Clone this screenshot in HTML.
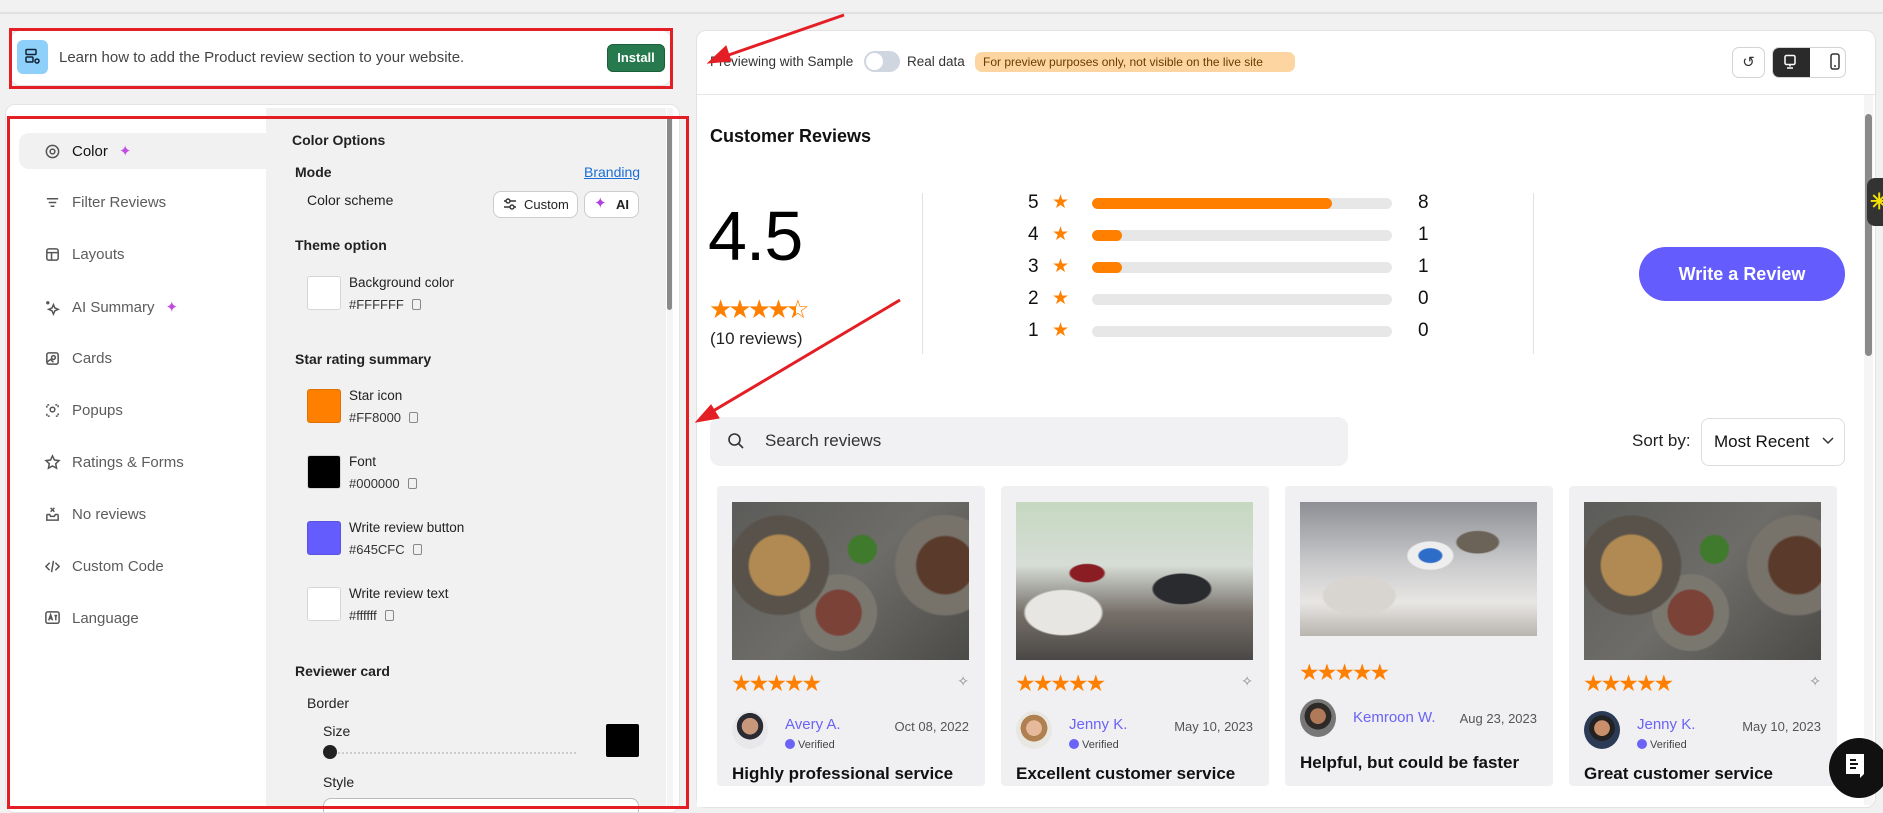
<!DOCTYPE html>
<html><head><meta charset="utf-8">
<style>
*{box-sizing:border-box;margin:0;padding:0}
body{width:1883px;height:813px;overflow:hidden;background:#f1f1f2;font-family:"Liberation Sans",Arial,sans-serif;position:relative;color:#222}
.a{position:absolute}
.nav{position:absolute;left:44px;font-size:15px;color:#5c5c5c;display:flex;align-items:center;gap:11px}
.nav svg{width:17px;height:17px;stroke:#555;fill:none;stroke-width:1.6}
.lbl{position:absolute;font-size:14px;color:#222}
.hex{position:absolute;font-size:13px;color:#333}
.sw{position:absolute;width:34px;height:34px;border:1px solid #d6d6d6;border-radius:3px}
.cp{display:inline-block;width:9px;height:11px;border:1.5px solid #888;border-radius:2px;margin-left:8px;vertical-align:-1px}
.h{position:absolute;font-size:14px;font-weight:bold;color:#222}
.card{position:absolute;top:486px;width:268px;height:300px;background:#f0f0f3;border-radius:4px;overflow:hidden}
.img{position:absolute;left:15px;top:16px;width:237px;height:158px}
.food{background:radial-gradient(circle at 20% 40%,#b08a52 0 14%,#58524a 15% 23%,transparent 24%),radial-gradient(circle at 45% 70%,#7b4238 0 13%,#7a776f 14% 22%,transparent 23%),radial-gradient(circle at 90% 40%,#5a3a2a 0 12%,#77736b 13% 21%,transparent 22%),radial-gradient(circle at 55% 30%,#3f7a2d 0 8%,transparent 9%),linear-gradient(135deg,#5b5b59,#6d6c68 50%,#4c4b48)}
.off{background:radial-gradient(ellipse at 20% 70%,#e8e6e2 0 14%,transparent 15%),radial-gradient(ellipse at 70% 55%,#2a2b2f 0 12%,transparent 13%),radial-gradient(ellipse at 30% 45%,#8a1d24 0 7%,transparent 8%),linear-gradient(180deg,#c5d8c0 0%,#d6ddd6 40%,#77706a 70%,#4a4846 100%)}
.meet{background:radial-gradient(ellipse at 55% 40%,#2d6cc7 0 6%,#eee 7% 12%,transparent 13%),radial-gradient(ellipse at 25% 70%,#d8d4cf 0 14%,transparent 15%),radial-gradient(ellipse at 75% 30%,#6b6258 0 8%,transparent 9%),linear-gradient(180deg,#8d8f94 0%,#c9c9cb 45%,#e8e6e4 75%,#b8b4ae 100%)}
.stars{position:absolute;left:14px;color:#ff8000;font-size:23px;letter-spacing:-3px;line-height:1}
.av{position:absolute;left:15px;width:36px;height:38px;border-radius:50%;background:radial-gradient(circle at 50% 40%,#c9987a 0 28%,#2b2b33 29% 45%,#e8e8ea 46%)}
.nm{position:absolute;left:68px;font-size:15px;color:#6a63f5}
.vf{position:absolute;left:68px;font-size:11px;color:#444}
.vf i{display:inline-block;width:10px;height:10px;border-radius:50%;background:#6a63f5;margin-right:3px;vertical-align:-1px}
.dt{position:absolute;right:16px;font-size:13px;color:#555}
.tt{position:absolute;left:15px;font-size:17px;font-weight:bold;color:#111}
.pin{position:absolute;right:16px;font-size:14px;color:#888}
.row{position:absolute;left:1028px;height:20px;width:420px}
.row .n{position:absolute;left:0;top:0;font-size:19px;color:#111}
.row .s{position:absolute;left:24px;top:-1px;font-size:19px;color:#ff8000}
.row .b{position:absolute;left:64px;top:6px;width:300px;height:11px;border-radius:6px;background:#e7e7e7;overflow:hidden}
.row .b i{display:block;height:100%;background:#ff8000;border-radius:6px}
.row .c{position:absolute;left:390px;top:0;font-size:19px;color:#111}
</style></head><body>
<div class="a" style="left:0;top:12px;width:1883px;height:2px;background:#e0e0e0"></div>

<div class="a" style="left:10px;top:30px;width:662px;height:56px;background:#fff;border-radius:10px;border:1px solid #e2e2e2"></div>
<div class="a" style="left:17px;top:40px;width:31px;height:34px;background:#8fd0fb;border-radius:6px"></div>
<svg class="a" style="left:24px;top:48px" width="17" height="18" viewBox="0 0 17 18" fill="none" stroke="#123" stroke-width="1.5"><rect x="2" y="1.5" width="10" height="5" rx="1"/><rect x="2" y="9" width="7" height="5" rx="1"/><circle cx="13" cy="13" r="2"/></svg>
<div class="a" style="left:59px;top:49px;font-size:15px;color:#444">Learn how to add the Product review section to your website.</div>
<div class="a" style="left:607px;top:44px;width:58px;height:28px;background:#267a4d;border-radius:6px;border:1px solid #1b5e3a;color:#fff;font-size:13px;font-weight:bold;text-align:center;line-height:26px">Install</div>
<div class="a" style="left:9px;top:28px;width:664px;height:61px;border:3px solid #e31e24"></div>

<div class="a" style="left:5px;top:104px;width:675px;height:709px;background:#fff;border-radius:10px;border:1px solid #e4e4e4;overflow:hidden">
 <div class="a" style="left:260px;top:3px;width:400px;height:700px;background:#f1f1f2"></div>
 <div class="a" style="left:317px;top:693px;width:316px;height:20px;border:1px solid #bbb;border-radius:8px;background:#fff"></div>
</div>
<div class="a" style="left:19px;top:133px;width:250px;height:36px;background:#f1f1f2;border-radius:10px 0 0 10px"></div>
<div class="a" style="left:667px;top:108px;width:6px;height:700px;background:#f4f4f4"></div>
<div class="a" style="left:667px;top:116px;width:5px;height:194px;background:#8a8a8a;border-radius:3px"></div>

<div class="nav" style="top:142px;color:#111"><svg viewBox="0 0 18 18"><circle cx="9" cy="9" r="6.5"/><circle cx="9" cy="9" r="2.5"/></svg>Color <span style="color:#c04de0;font-size:15px">✦</span></div>
<div class="nav" style="top:194px"><svg viewBox="0 0 18 18"><path d="M3 5h12M5 9h8M7 13h4"/></svg>Filter Reviews</div>
<div class="nav" style="top:246px"><svg viewBox="0 0 18 18"><rect x="3" y="3" width="12" height="12" rx="2"/><path d="M3 7h12M8 7v8"/></svg>Layouts</div>
<div class="nav" style="top:298px"><svg viewBox="0 0 18 18"><path d="M10 6l1.5 3.5L15 11l-3.5 1.5L10 16l-1.5-3.5L5 11l3.5-1.5z"/><circle cx="4" cy="4" r="1"/></svg>AI Summary <span style="color:#c04de0">✦</span></div>
<div class="nav" style="top:350px"><svg viewBox="0 0 18 18"><rect x="3" y="3" width="12" height="12" rx="2"/><circle cx="10" cy="8" r="2"/><path d="M3 13l4-3 3 3"/></svg>Cards</div>
<div class="nav" style="top:402px"><svg viewBox="0 0 18 18"><path d="M3 6V3h3M12 3h3v3M15 12v3h-3M6 15H3v-3" stroke-dasharray="2 1.5"/><circle cx="9" cy="8" r="2.5"/></svg>Popups</div>
<div class="nav" style="top:454px"><svg viewBox="0 0 18 18"><path d="M9 2l2.1 4.4 4.8.6-3.5 3.3.9 4.7L9 12.7 4.7 15l.9-4.7L2.1 7l4.8-.6z"/></svg>Ratings &amp; Forms</div>
<div class="nav" style="top:506px"><svg viewBox="0 0 18 18"><path d="M3 9v6h12V9M3 9l3 0 1 2h4l1-2h3M7 2l4 4M11 2L7 6"/></svg>No reviews</div>
<div class="nav" style="top:558px"><svg viewBox="0 0 18 18"><path d="M6 5L2 9l4 4M12 5l4 4-4 4M10 3L8 15"/></svg>Custom Code</div>
<div class="nav" style="top:610px"><svg viewBox="0 0 18 18"><rect x="2" y="2" width="14" height="12" rx="2"/><path d="M5 11l2-6 2 6M6 9h2M11 6h3M12.5 5v6"/></svg>Language</div>

<div class="h" style="left:292px;top:132px;font-size:14px">Color Options</div>
<div class="h" style="left:295px;top:164px">Mode</div>
<div class="a" style="left:584px;top:164px;font-size:14px;color:#1c6ed6;text-decoration:underline">Branding</div>
<div class="lbl" style="left:307px;top:192px">Color scheme</div>
<div class="a" style="left:493px;top:191px;width:85px;height:27px;background:#fff;border:1px solid #ccc;border-radius:8px;font-size:13px;line-height:25px;padding-left:30px">Custom</div>
<svg class="a" style="left:503px;top:197px" width="14" height="14" viewBox="0 0 14 14" fill="none" stroke="#333" stroke-width="1.4"><path d="M1 4h12M1 10h12"/><circle cx="5" cy="4" r="2" fill="#fff"/><circle cx="9" cy="10" r="2" fill="#fff"/></svg>
<div class="a" style="left:584px;top:191px;width:55px;height:27px;background:#fff;border:1px solid #ccc;border-radius:8px;font-size:13px;line-height:25px;padding-left:31px;font-weight:bold">AI</div>
<div class="a" style="left:594px;top:194px;color:#b040e0;font-size:15px">✦</div>
<div class="h" style="left:295px;top:237px">Theme option</div>
<div class="sw" style="left:307px;top:276px;background:#fff"></div>
<div class="lbl" style="left:349px;top:275px;font-size:13.5px">Background color</div>
<div class="hex" style="left:349px;top:297px">#FFFFFF<span class="cp"></span></div>
<div class="h" style="left:295px;top:351px">Star rating summary</div>
<div class="sw" style="left:307px;top:389px;background:#ff8000;border-color:#e07000"></div>
<div class="lbl" style="left:349px;top:388px;font-size:13.5px">Star icon</div>
<div class="hex" style="left:349px;top:410px">#FF8000<span class="cp"></span></div>
<div class="sw" style="left:307px;top:455px;background:#000"></div>
<div class="lbl" style="left:349px;top:454px;font-size:13.5px">Font</div>
<div class="hex" style="left:349px;top:476px">#000000<span class="cp"></span></div>
<div class="sw" style="left:307px;top:521px;background:#645cfc;border-color:#5a52e0"></div>
<div class="lbl" style="left:349px;top:520px;font-size:13.5px">Write review button</div>
<div class="hex" style="left:349px;top:542px">#645CFC<span class="cp"></span></div>
<div class="sw" style="left:307px;top:587px;background:#fff"></div>
<div class="lbl" style="left:349px;top:586px;font-size:13.5px">Write review text</div>
<div class="hex" style="left:349px;top:608px">#ffffff<span class="cp"></span></div>
<div class="h" style="left:295px;top:663px">Reviewer card</div>
<div class="lbl" style="left:307px;top:695px">Border</div>
<div class="lbl" style="left:323px;top:723px">Size</div>
<div class="a" style="left:330px;top:752px;width:246px;height:3px;border-top:2px dotted #ccc"></div>
<div class="a" style="left:323px;top:745px;width:14px;height:14px;border-radius:50%;background:#222"></div>
<div class="a" style="left:606px;top:724px;width:33px;height:33px;background:#000;border-radius:2px"></div>
<div class="lbl" style="left:323px;top:774px">Style</div>
<div class="a" style="left:7px;top:116px;width:682px;height:693px;border:3px solid #e31e24"></div>

<div class="a" style="left:696px;top:30px;width:1180px;height:778px;background:#fff;border-radius:10px;border:1px solid #e2e2e2;overflow:hidden">
 <div class="a" style="left:0;top:63px;width:1180px;height:1px;background:#e6e6e6"></div>
</div>
<div class="a" style="left:710px;top:54px;font-size:13.5px;color:#333">Previewing with Sample</div>
<div class="a" style="left:864px;top:51px;width:36px;height:21px;border-radius:11px;background:#d0d6e0"><div style="position:absolute;left:2px;top:2px;width:17px;height:17px;border-radius:50%;background:#fff"></div></div>
<div class="a" style="left:907px;top:54px;font-size:13.5px;color:#333">Real data</div>
<div class="a" style="left:975px;top:52px;width:320px;height:20px;background:#fdd5a0;border-radius:7px;font-size:12px;color:#6a3d00;line-height:20px;padding-left:8px">For preview purposes only, not visible on the live site</div>
<div class="a" style="left:1732px;top:47px;width:33px;height:31px;border:1px solid #d3d3d3;border-radius:7px;text-align:center;line-height:29px;font-size:15px;color:#333">↺</div>
<div class="a" style="left:1772px;top:47px;width:74px;height:31px;border:1px solid #d3d3d3;border-radius:7px;overflow:hidden;background:#fff"><div style="position:absolute;left:0;top:0;width:37px;height:31px;background:#2a2a2a"></div></div>
<svg class="a" style="left:1783px;top:54px" width="14" height="16" viewBox="0 0 14 16" fill="none" stroke="#fff" stroke-width="1.5"><rect x="2" y="1.5" width="10" height="9" rx="1.5"/><path d="M7 10.5v2M4 14h6"/></svg>
<svg class="a" style="left:1830px;top:53px" width="10" height="18" viewBox="0 0 10 18" fill="none" stroke="#333" stroke-width="1.5"><rect x="1" y="1" width="8" height="15" rx="2"/><path d="M4 13h2"/></svg>

<div class="a" style="left:1864px;top:95px;width:9px;height:710px;background:#f5f5f5"></div>
<div class="a" style="left:1865px;top:114px;width:7px;height:242px;background:#8a8a8a;border-radius:4px"></div>
<div class="a" style="left:1867px;top:178px;width:18px;height:48px;background:#333;border-radius:8px 0 0 8px;color:#f5e400;font-size:22px;line-height:48px;padding-left:3px;font-weight:bold">✳</div>

<div class="a" style="left:710px;top:126px;font-size:18px;font-weight:bold;color:#111">Customer Reviews</div>
<div class="a" style="left:708px;top:196px;font-size:70px;color:#000;letter-spacing:-1px;font-weight:500">4.5</div>
<div class="a" style="left:709px;top:296px;font-size:26px;color:#ff8000;letter-spacing:-4px;line-height:1">★★★★<span style="display:inline-block;position:relative;color:#ff8000">☆<span style="position:absolute;left:0;top:0;width:48%;overflow:hidden">★</span></span></div>
<div class="a" style="left:710px;top:329px;font-size:17px;color:#222">(10 reviews)</div>
<div class="a" style="left:922px;top:193px;width:1px;height:161px;background:#e2e2e2"></div>
<div class="a" style="left:1533px;top:193px;width:1px;height:161px;background:#e2e2e2"></div>

<div class="row" style="top:192px"><span class="n">5</span><span class="s">★</span><div class="b"><i style="width:240px"></i></div><span class="c">8</span></div>
<div class="row" style="top:224px"><span class="n">4</span><span class="s">★</span><div class="b"><i style="width:30px"></i></div><span class="c">1</span></div>
<div class="row" style="top:256px"><span class="n">3</span><span class="s">★</span><div class="b"><i style="width:30px"></i></div><span class="c">1</span></div>
<div class="row" style="top:288px"><span class="n">2</span><span class="s">★</span><div class="b"></div><span class="c">0</span></div>
<div class="row" style="top:320px"><span class="n">1</span><span class="s">★</span><div class="b"></div><span class="c">0</span></div>

<div class="a" style="left:1639px;top:247px;width:206px;height:54px;background:#645cfc;border-radius:27px;color:#fff;font-size:18px;font-weight:bold;text-align:center;line-height:54px">Write a Review</div>

<div class="a" style="left:710px;top:417px;width:638px;height:49px;background:#f1f1f3;border-radius:10px"></div>
<svg class="a" style="left:727px;top:432px" width="18" height="18" viewBox="0 0 18 18" fill="none" stroke="#333" stroke-width="1.6"><circle cx="7.5" cy="7.5" r="5.5"/><path d="M11.5 11.5L16 16"/></svg>
<div class="a" style="left:765px;top:431px;font-size:17px;color:#333">Search reviews</div>
<div class="a" style="left:1632px;top:431px;font-size:17px;color:#222">Sort by:</div>
<div class="a" style="left:1701px;top:418px;width:144px;height:48px;border:1px solid #ddd;border-radius:8px;font-size:17px;color:#111;line-height:46px;padding-left:12px">Most Recent</div>
<svg class="a" style="left:1822px;top:437px" width="12" height="8" viewBox="0 0 12 8" fill="none" stroke="#333" stroke-width="1.5"><path d="M1 1l5 5 5-5"/></svg>

<div class="card" style="left:717px">
 <div class="img food"></div>
 <div class="stars" style="top:186px">★★★★★</div><div class="pin" style="top:187px">✧</div>
 <div class="av" style="top:225px"></div>
 <div class="nm" style="top:230px">Avery A.</div><div class="dt" style="top:233px">Oct 08, 2022</div>
 <div class="vf" style="top:253px"><i></i>Verified</div>
 <div class="tt" style="top:278px">Highly professional service</div>
</div>
<div class="card" style="left:1001px">
 <div class="img off"></div>
 <div class="stars" style="top:186px">★★★★★</div><div class="pin" style="top:187px">✧</div>
 <div class="av" style="top:225px;background:radial-gradient(circle at 50% 45%,#e6b99a 0 28%,#b08050 29% 48%,#e9e7e2 49%)"></div>
 <div class="nm" style="top:230px">Jenny K.</div><div class="dt" style="top:233px">May 10, 2023</div>
 <div class="vf" style="top:253px"><i></i>Verified</div>
 <div class="tt" style="top:278px">Excellent customer service</div>
</div>
<div class="card" style="left:1285px">
 <div class="img meet" style="height:134px"></div>
 <div class="stars" style="top:175px">★★★★★</div>
 <div class="av" style="top:213px;background:radial-gradient(circle at 50% 45%,#b07a58 0 28%,#2d2a28 29% 48%,#777 49%)"></div>
 <div class="nm" style="top:223px">Kemroon W.</div><div class="dt" style="top:225px">Aug 23, 2023</div>
 <div class="tt" style="top:267px">Helpful, but could be faster</div>
</div>
<div class="card" style="left:1569px">
 <div class="img food"></div>
 <div class="stars" style="top:186px">★★★★★</div><div class="pin" style="top:187px">✧</div>
 <div class="av" style="top:225px;background:radial-gradient(circle at 50% 45%,#c98f6a 0 28%,#222 29% 46%,#2b3a55 47%)"></div>
 <div class="nm" style="top:230px">Jenny K.</div><div class="dt" style="top:233px">May 10, 2023</div>
 <div class="vf" style="top:253px"><i></i>Verified</div>
 <div class="tt" style="top:278px">Great customer service</div>
</div>
<div class="a" style="left:697px;top:786px;width:1166px;height:21px;background:#fff"></div>

<div class="a" style="left:1829px;top:738px;width:60px;height:60px;border-radius:50%;background:#111"></div>
<svg class="a" style="left:1844px;top:752px" width="22" height="30" viewBox="0 0 22 30" fill="#fff"><path d="M2 2h18v20l-4 4v-4H2z"/><path d="M6 8h6M6 12h8M6 16h6" stroke="#111" stroke-width="2"/></svg>

<svg class="a" style="left:0;top:0" width="1883" height="813" viewBox="0 0 1883 813">
<g stroke="#e31e24" stroke-width="3" fill="#e31e24">
<line x1="844" y1="15" x2="720" y2="58"/>
<polygon points="708,63 726,46 731,61" stroke-width="1"/>
<line x1="900" y1="300" x2="708" y2="414"/>
<polygon points="696,422 711,405 719,418" stroke-width="1"/>
</g></svg>
</body></html>
